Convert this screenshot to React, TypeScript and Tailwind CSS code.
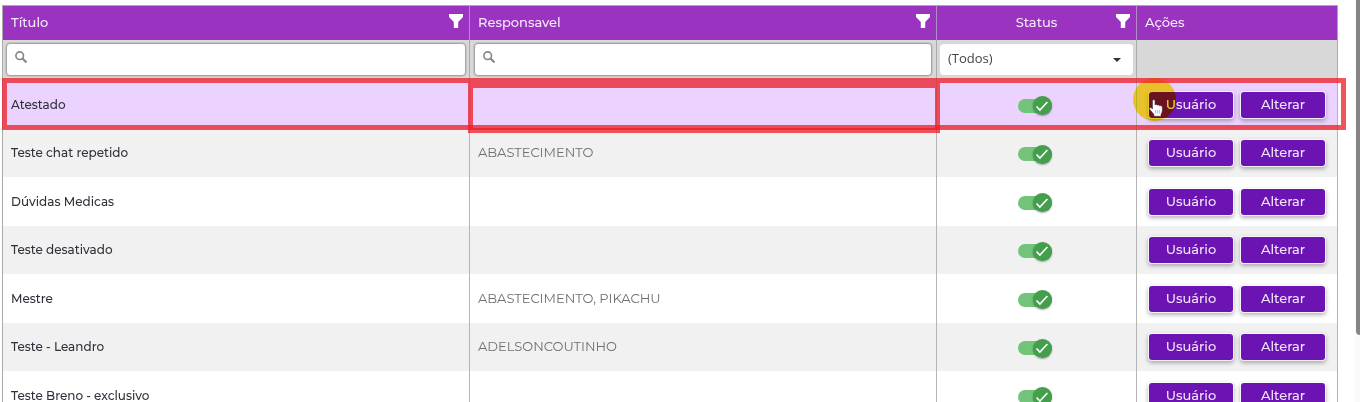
import React from "react";

type Row = { title: string; owner: string };

const rows: Row[] = [
  { title: "Atestado", owner: "" },
  { title: "Teste chat repetido", owner: "ABASTECIMENTO" },
  { title: "Dúvidas Medicas", owner: "" },
  { title: "Teste desativado", owner: "" },
  { title: "Mestre", owner: "ABASTECIMENTO, PIKACHU" },
  { title: "Teste - Leandro", owner: "ADELSONCOUTINHO" },
  { title: "Teste Breno - exclusivo", owner: "" },
];

function Funnel() {
  return (
    <svg viewBox="0 0 14 14" className="h-3.5 w-3.5 shrink-0 fill-white" aria-hidden="true">
      <path d="M0 0h14v3L9.2 8v6H4.8V8L0 3z" />
    </svg>
  );
}

function HeaderCell({ label, filter = true, center = false }: { label: string; filter?: boolean; center?: boolean }) {
  return (
    <th scope="col" className="h-[34px] border-r border-[#b48cc8] px-2 py-0 text-left font-medium last:border-[#aaaaaa]">
      <div className="flex items-center">
        <span className={center ? "flex-1 pl-3 text-center" : "flex-1"}>{label}</span>
        {filter && (
          <button type="button" aria-label={"Filtrar " + label} className="-mr-0.5 pb-1">
            <Funnel />
          </button>
        )}
      </div>
    </th>
  );
}

function SearchBox({ label }: { label: string }) {
  return (
    <label className="flex h-[33px] items-center rounded border border-[#a4a4a4] bg-white px-2 shadow-[0_0_0_1px_#c4c4c4]">
      <svg viewBox="0 0 12 12" className="mb-1 h-3 w-3 shrink-0 fill-none stroke-[#80868b]" aria-hidden="true">
        <circle cx="4.7" cy="4.7" r="3.8" strokeWidth="1.6" />
        <path d="M7.5 7.5l4 4" strokeWidth="2" />
      </svg>
      <input type="text" aria-label={label} className="min-w-0 flex-1 bg-transparent px-2 outline-none" />
    </label>
  );
}

function Toggle({ label }: { label: string }) {
  return (
    <label className="inline-flex h-5 w-[34px] cursor-pointer items-center">
      <input type="checkbox" defaultChecked aria-label={label} className="peer sr-only" />
      <span className="flex h-3.5 w-[34px] items-center justify-end rounded-full bg-[#b5b5b5] peer-checked:bg-[#72c47a]">
        <span className="flex h-[19px] w-[19px] shrink-0 items-center justify-center rounded-full bg-[#439f4b] shadow-[0_1px_2px_rgba(0,0,0,0.35)]">
          <svg viewBox="0 0 14 14" className="h-3.5 w-3.5 fill-none stroke-white" aria-hidden="true">
            <path d="M1.5 7.5l3.4 3.6L12.4 3" strokeWidth="1.6" />
          </svg>
        </span>
      </span>
    </label>
  );
}

function ActionButton({ children }: { children: React.ReactNode }) {
  return (
    <button
      type="button"
      className="h-[26px] w-[84px] rounded-[3px] bg-[#6c13b4] text-[13px] font-medium text-[#f1e6fa] shadow-[0_0_0_1px_rgba(255,255,255,0.8),0_2px_4px_1px_rgba(0,0,0,0.3)]"
    >
      {children}
    </button>
  );
}

function Pointer() {
  return (
    <span aria-hidden="true" className="pointer-events-none">
      <span className="absolute -top-0.5 -left-1 h-[43px] w-[43px] rounded-full bg-[#ebbe05] opacity-85 mix-blend-darken" />
      <svg viewBox="0 0 14 18" className="absolute top-[19px] left-3 h-[18px] w-3.5">
        <path
          d="M3.500 1.800C3.500.4 6 .4 6 1.800v4.200c.3-.8 2.100-.7 2.400.3.4-.7 2-.4 2.300.6.8-.5 2.600-.1 2.600 1.200v3.400c0 2-1 2.600-1.300 4.200v1.600H5v-1.600C4.300 14.500 2.300 12.500.6 10.300c-.8-1.300.8-2.200 1.900-1.200l1 .9z"
          fill="#fff"
          stroke="#3a2438"
          strokeWidth=".5"
        />
        <path d="M6.600 11v3.500M8.600 11v3.500M10.600 11v3.500" stroke="#777" strokeWidth=".5" />
      </svg>
    </span>
  );
}

export default function App() {
  return (
    <div className="flex h-screen overflow-hidden bg-white font-['Montserrat','Inter',sans-serif] text-[13px] text-[#30303a]">
      <main className="min-w-0 flex-1 pt-[5px] pr-[17px] pl-0.5">
        <div className="relative">
          <table className="w-full table-fixed border-separate border-spacing-0 border-t border-l border-[#aaaaaa]">
            <colgroup>
              <col />
              <col />
              <col className="w-[200px]" />
              <col className="w-[201px]" />
            </colgroup>
            <thead>
              <tr className="bg-[#9933c0] text-[13px] text-[#f6e9fb]">
                <HeaderCell label="Título" />
                <HeaderCell label="Responsavel" />
                <HeaderCell label="Status" center />
                <HeaderCell label="Ações" filter={false} />
              </tr>
              <tr className="bg-[#d8d8d8]">
                <td className="h-10 border-r border-[#aaaaaa] px-[3px] pt-0 pb-0.5">
                  <SearchBox label="Buscar por título" />
                </td>
                <td className="h-10 border-r border-[#aaaaaa] px-1 pt-0 pb-0.5">
                  <SearchBox label="Buscar por responsável" />
                </td>
                <td className="h-10 border-r border-[#aaaaaa] px-[3px] pt-0 pb-0.5">
                  <div className="relative">
                    <select
                      aria-label="Status"
                      className="block h-[31px] w-full appearance-none rounded bg-white px-2 font-['Open_Sans',sans-serif] text-[13px] text-[#444444]"
                    >
                      <option>(Todos)</option>
                      <option>Ativo</option>
                      <option>Inativo</option>
                    </select>
                    <svg viewBox="0 0 8 4" className="pointer-events-none absolute top-3.5 right-3 h-1 w-2 fill-[#333333]" aria-hidden="true">
                      <path d="M0 0h8L4 4z" />
                    </svg>
                  </div>
                </td>
                <td className="h-10 border-r border-[#aaaaaa] p-0" />
              </tr>
            </thead>
            <tbody>
              {rows.map((row, i) => (
                <tr key={row.title} className={i === 0 ? "h-[49px] bg-[#ebd2ff]" : "odd:h-[49px] even:h-12 odd:bg-white even:bg-[#f1f1f1]"}>
                  <td className="border-r border-[#b4b4b4] px-2 py-0 text-xs font-medium">{row.title}</td>
                  <td className="relative border-r border-[#b4b4b4] px-2 py-0 text-[#707070]">
                    {row.owner}
                    {i === 0 && (
                      <span className="pointer-events-none absolute top-[3px] -right-1 -bottom-1 -left-0.5 z-10 border-[5px] border-[#ec1c24]/75" />
                    )}
                  </td>
                  <td className="border-r border-[#b4b4b4] p-0 text-center">
                    <div className="flex justify-center pt-0.5 pr-1">
                      <Toggle label={"Status de " + row.title} />
                    </div>
                  </td>
                  <td className="relative border-r border-[#b4b4b4] p-0">
                    <div className="flex items-center gap-2 pl-3">
                      <ActionButton>Usuário</ActionButton>
                      <ActionButton>Alterar</ActionButton>
                    </div>
                    {i === 0 && <Pointer />}
                  </td>
                </tr>
              ))}
            </tbody>
          </table>
          <div className="pointer-events-none absolute top-[73px] -right-2 left-0 h-[52px] border-[5px] border-[#ec1c24]/75" />
        </div>
      </main>
      <div className="flex w-[5px] flex-col bg-[#fafafa] pl-px" aria-hidden="true">
        <div className="h-5/6 rounded-bl bg-[#858585]" />
      </div>
    </div>
  );
}
